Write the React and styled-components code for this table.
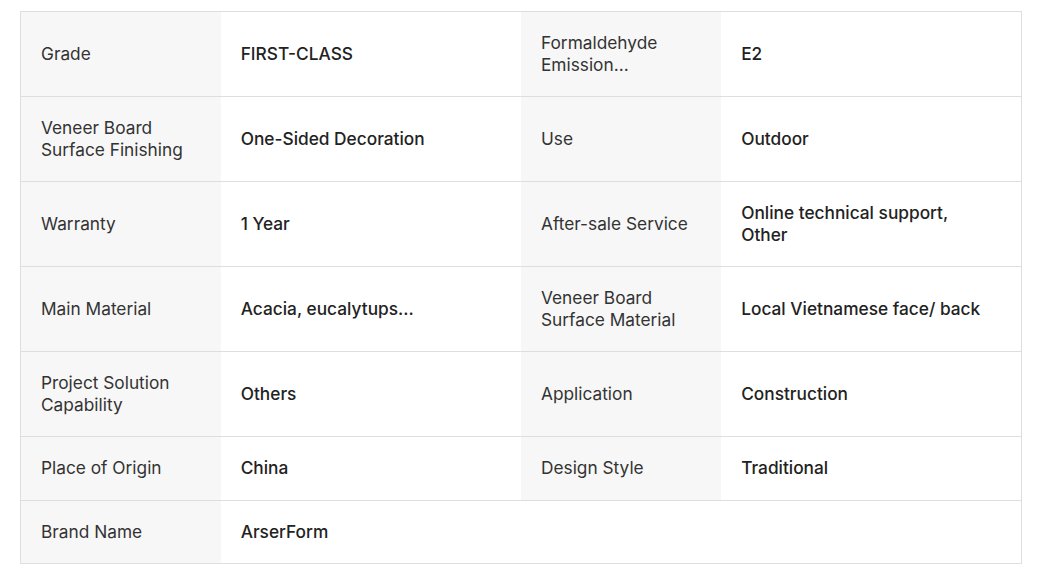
import React from 'react'
import styled, { createGlobalStyle } from 'styled-components'

const GlobalStyle = createGlobalStyle`
  body {
    margin: 0;
    background: #ffffff;
    font-family: Inter, "Noto Sans", sans-serif;
  }
`;

const rows = [
  [['Grade', 'FIRST-CLASS'], ['Formaldehyde Emission...', 'E2']],
  [['Veneer Board Surface Finishing', 'One-Sided Decoration'], ['Use', 'Outdoor']],
  [['Warranty', '1 Year'], ['After-sale Service', 'Online technical support, Other']],
  [['Main Material', 'Acacia, eucalytups...'], ['Veneer Board Surface Material', 'Local Vietnamese face/ back']],
  [['Project Solution Capability', 'Others'], ['Application', 'Construction']],
  [['Place of Origin', 'China'], ['Design Style', 'Traditional']],
  [['Brand Name', 'ArserForm']],
];

const App = () => {
  return (
    <Page>
      <GlobalStyle />
      <Specs>
        <colgroup>
          <col width="200" />
          <col width="300" />
          <col width="200" />
          <col width="300" />
        </colgroup>
        <tbody>
          {rows.map((row, i) => (
            <Row key={i}>
              {row.map(([label, value]) => (
                <React.Fragment key={label}>
                  <Label>{label}</Label>
                  <Value>{value}</Value>
                </React.Fragment>
              ))}
              {row.length === 1 && <Value colSpan={2} />}
            </Row>
          ))}
        </tbody>
      </Specs>
    </Page>
  )
}

export default App

const Page = styled.div`
  padding: 11px 0 0 20px;
`;

const Specs = styled.table`
  width: 1002px;
  table-layout: fixed;
  border-collapse: collapse;
  border: 1px solid #dedede;
`;

const Row = styled.tr`
  height: 63.6px;
  border-top: 1px solid #dedede;
`;

const Label = styled.td`
  background: #f7f7f7;
  padding: 19.5px 20px;
  font-size: 17.3px;
  line-height: 22.5px;
  color: #333333;
  font-weight: 400;
  vertical-align: middle;
`;

const Value = styled.td`
  background: #ffffff;
  padding: 19.5px 30px 19.5px 20px;
  font-size: 17.3px;
  line-height: 22.5px;
  color: #222222;
  font-weight: 500;
  vertical-align: middle;
`;
